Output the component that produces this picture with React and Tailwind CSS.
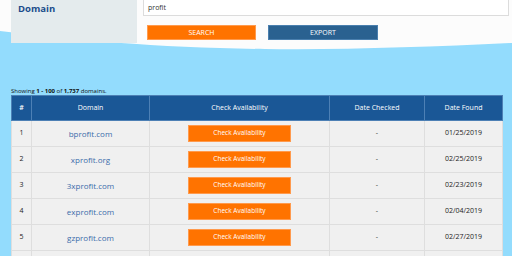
import React from 'react'

const rows = [
  { n: 1, domain: 'bprofit.com', found: '01/25/2019' },
  { n: 2, domain: 'xprofit.org', found: '02/25/2019' },
  { n: 3, domain: '3xprofit.com', found: '02/23/2019' },
  { n: 4, domain: 'exprofit.com', found: '02/04/2019' },
  { n: 5, domain: 'gzprofit.com', found: '02/27/2019' },
]

function Wave() {
  return (
    <svg className="absolute left-0 top-0" width="512" height="60" viewBox="0 0 512 60">
      <path d="M0 0 H512 V43 C430 47 340 50 265 49 C165 48 70 40 0 31 Z" fill="#fcfcfc" />
    </svg>
  )
}

export default function App() {
  return (
    <div
      className="relative w-[512px] h-[256px] overflow-hidden bg-[#93dcfd]"
      style={{ fontFamily: '"Open Sans", "DejaVu Sans", sans-serif' }}
    >
      <Wave />

      {/* Search panel */}
      <div className="relative flex">
        <div className="ml-[11px] w-[126px] h-[43px] bg-[#e4ebed] pl-[7px] pt-[2px]">
          <p className="text-[9.5px] leading-[14px] font-bold text-[#1b4d8c]">Domain</p>
        </div>
        <div className="flex flex-col ml-[6px]">
          <div className="w-[366px] h-[17px] -mt-[1px] bg-white border border-[#dcdcdc] pl-[4px] text-[7px] leading-[15px] text-[#333]">
            profit
          </div>
          <div className="flex gap-[12px] mt-[9px] ml-[4px]">
            <button className="w-[109px] h-[15px] bg-[#ff7300] border border-[#ff9a4d] text-white text-[7px] leading-none">
              SEARCH
            </button>
            <button className="w-[110px] h-[15px] bg-[#2a6190] border border-[#4a7fae] text-white text-[7px] leading-none">
              EXPORT
            </button>
          </div>
        </div>
      </div>

      {/* Results */}
      <div className="relative ml-[11px] mt-[44px]">
        <p className="text-[6px] leading-[8px] text-[#111]">
          Showing <b>1 - 100</b> of <b>1,737</b> domains.
        </p>
        <table className="border-collapse w-[491px] table-fixed text-[7px]">
          <colgroup>
            <col className="w-[20px]" />
            <col className="w-[118px]" />
            <col className="w-[180px]" />
            <col className="w-[95px]" />
            <col className="w-[78px]" />
          </colgroup>
          <thead>
            <tr className="h-[25px] bg-[#1a5796] text-white">
              <th className="border border-[#4d80b5] font-semibold">#</th>
              <th className="border border-[#4d80b5] font-medium">Domain</th>
              <th className="border border-[#4d80b5] font-medium">Check Availability</th>
              <th className="border border-[#4d80b5] font-medium">Date Checked</th>
              <th className="border border-[#4d80b5] font-medium">Date Found</th>
            </tr>
          </thead>
          <tbody>
            {rows.map((r) => (
              <tr key={r.n} className="h-[26px] bg-[#f0f0f0] text-center">
                <td className="border border-[#dedede] text-[#222]">{r.n}</td>
                <td className="border border-[#dedede] text-[8px] text-[#3b6cab]">{r.domain}</td>
                <td className="border border-[#dedede]">
                  <button className="w-[103px] h-[17px] bg-[#ff7300] border border-[#ff9a4d] text-white text-[6.5px] leading-none">
                    Check Availability
                  </button>
                </td>
                <td className="border border-[#dedede] text-[#333]">-</td>
                <td className="border border-[#dedede] text-[#222]">{r.found}</td>
              </tr>
            ))}
            <tr className="h-[26px] bg-[#f0f0f0]">
              <td className="border border-[#dedede]" />
              <td className="border border-[#dedede]" />
              <td className="border border-[#dedede]" />
              <td className="border border-[#dedede]" />
              <td className="border border-[#dedede]" />
            </tr>
          </tbody>
        </table>
      </div>
    </div>
  )
}
